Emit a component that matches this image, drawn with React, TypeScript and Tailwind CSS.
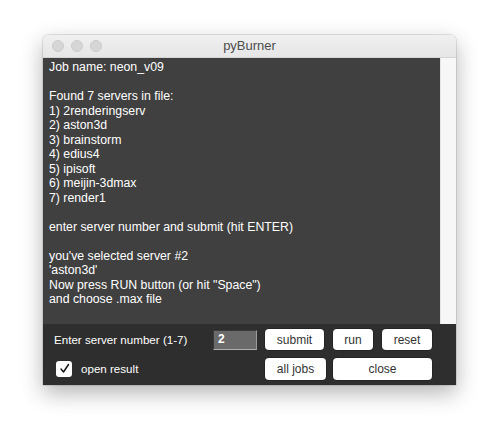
import React from 'react';

const lines = [
  'Job name: neon_v09',
  '',
  'Found 7 servers in file:',
  '1) 2renderingserv',
  '2) aston3d',
  '3) brainstorm',
  '4) edius4',
  '5) ipisoft',
  '6) meijin-3dmax',
  '7) render1',
  '',
  'enter server number and submit (hit ENTER)',
  '',
  "you've selected server #2",
  "'aston3d'",
  'Now press RUN button (or hit "Space")',
  'and choose .max file',
];

const Btn: React.FC<{ label: string; w: string }> = ({ label, w }) => (
  <button
    className={`${w} h-full bg-white rounded-[4px] text-[12px] text-[#333] flex items-center justify-center shadow-[0_0_0_0.5px_#1a1a1a]`}
  >
    {label}
  </button>
);

export default function App() {
  return (
    <div
      className="w-[500px] h-[437px] bg-white pt-[35px] pl-[43px]"
      style={{ fontFamily: '"Liberation Sans", Arial, sans-serif' }}
    >
      <div className="w-[413px] h-[350px] flex flex-col rounded-t-[5px] overflow-hidden shadow-[0_8px_22px_rgba(0,0,0,0.3),0_0_0_0.5px_rgba(0,0,0,0.2)]">
        {/* title bar */}
        <div className="h-[23px] bg-gradient-to-b from-[#f0f0f0] to-[#e6e6e6] border-b border-[#d4d4d4] flex items-center relative">
          <div className="flex gap-[7px] pl-[9px]">
            <span className="w-[12px] h-[12px] rounded-full bg-[#d6d6d6] border border-[#cbcbcb]" />
            <span className="w-[12px] h-[12px] rounded-full bg-[#d6d6d6] border border-[#cbcbcb]" />
            <span className="w-[12px] h-[12px] rounded-full bg-[#d6d6d6] border border-[#cbcbcb]" />
          </div>
          <div className="absolute inset-0 flex items-center justify-center text-[13px] text-[#4d4d4d]">
            pyBurner
          </div>
        </div>

        {/* log area */}
        <div className="h-[266px] flex">
          <div className="w-[397px] h-full bg-[#404040] text-white text-[12.3px] leading-[14.5px] pl-[6px] pt-[2px] overflow-hidden">
            {lines.map((l, i) => (
              <div key={i} className="whitespace-pre h-[14.5px]">
                {l}
              </div>
            ))}
          </div>
          <div className="w-[16px] h-full bg-[#f7f7f7] border-l border-[#e4e4e4]" />
        </div>

        {/* controls */}
        <div className="flex-1 bg-[#2e2e2e] flex flex-col pt-[5px] gap-[8px] text-[11.6px] text-white">
          <div className="h-[21px] flex items-center">
            <div className="w-[170px] pl-[11px]">Enter server number (1-7)</div>
            <div className="w-[44px] h-[20px] bg-[#6a6a6a] border border-t-[#3a3a3a] border-l-[#3a3a3a] border-r-[#9a9a9a] border-b-[#b0b0b0] text-white font-bold text-[12px] pl-[4px] leading-[17px]">
              2
            </div>
            <div className="ml-[8px] h-full flex gap-[9px]">
              <Btn label="submit" w="w-[59px]" />
              <Btn label="run" w="w-[40px]" />
              <Btn label="reset" w="w-[50px]" />
            </div>
          </div>
          <div className="h-[22px] flex items-center">
            <div className="w-[222px] flex items-center pl-[13px]">
              <span className="w-[16px] h-[16px] bg-white rounded-[3px] flex items-center justify-center">
                <svg width="11" height="11" viewBox="0 0 11 11" fill="none">
                  <path d="M2 6 L4.5 9 L9.5 1.5" stroke="#111" strokeWidth="1.4" strokeLinecap="round" strokeLinejoin="round" />
                </svg>
              </span>
              <span className="ml-[9px]">open result</span>
            </div>
            <div className="h-full flex gap-[7px]">
              <Btn label="all jobs" w="w-[61px]" />
              <Btn label="close" w="w-[99px]" />
            </div>
          </div>
        </div>
      </div>
    </div>
  );
}
